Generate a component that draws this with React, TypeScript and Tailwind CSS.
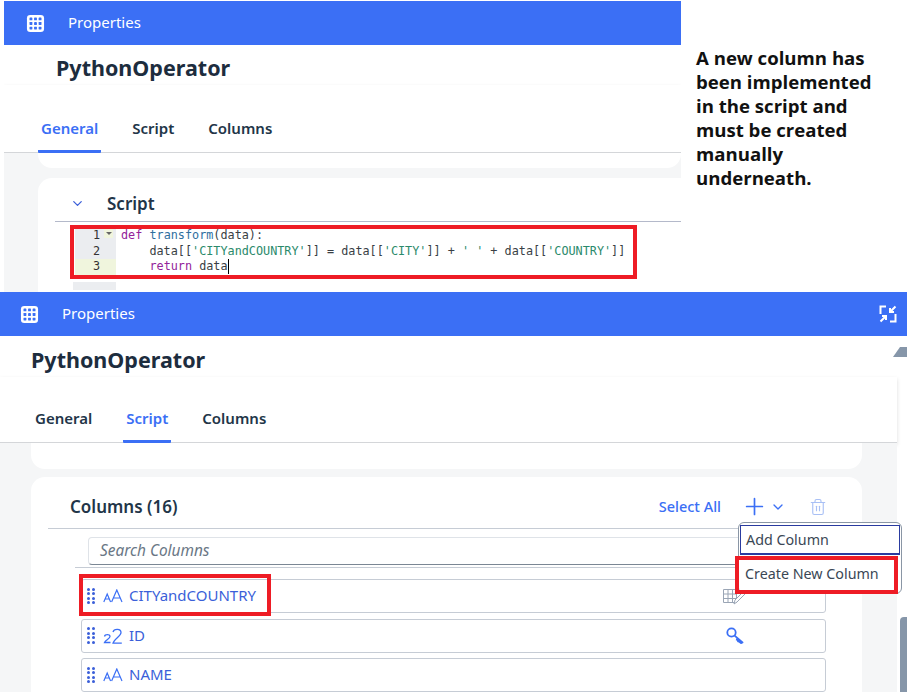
import { ChevronDown, Plus, Trash2 } from "lucide-react"

const BODY = "font-['Noto_Sans','Open_Sans',sans-serif]"

function GridIcon({ className }: { className: string }) {
    return (
        <svg viewBox="0 0 20 20" className={className} fill="none">
            <rect x="1" y="1" width="18" height="18" rx="3.5" fill="#fff" />
            {[5.2, 10, 14.8].flatMap((x) =>
                [5.2, 10, 14.8].map((y) => (
                    <rect key={`${x}-${y}`} x={x - 1.5} y={y - 1.5} width="3" height="3" rx="0.5" fill="#3b6ff5" />
                ))
            )}
        </svg>
    )
}

function Header({ pad, gap, children }: { pad: string; gap: string; children?: React.ReactNode }) {
    return (
        <div className={`flex h-[44px] items-center bg-[#3b6ff5] ${pad} ${gap}`}>
            <GridIcon className="h-[19px] w-[19px]" />
            <span className="flex-1 pb-[2px] text-[15px] text-white">Properties</span>
            {children}
        </div>
    )
}

function Tabs({ active, height, pad, gap }: { active: string; height: string; pad: string; gap: string }) {
    return (
        <div className={`flex items-end border-b border-[#d4d6d9] shadow-[0_2px_4px_rgba(0,0,0,0.14)] ${height} ${pad} ${gap}`}>
            {["General", "Script", "Columns"].map((t) => (
                <div
                    key={t}
                    className={`-mb-px border-b-[3px] px-[3px] pb-[12px] text-[15px] leading-[20px] font-semibold ${
                        t === active ? "rounded-b-[1px] border-[#3b6ff5] text-[#3b6ff5]" : "border-transparent text-[#223548]"
                    }`}
                >
                    {t}
                </div>
            ))}
        </div>
    )
}

function AaIcon() {
    return (
        <svg viewBox="0 0 20 14" className="h-[14px] w-[20px]" fill="none" stroke="#3b6ff5" strokeWidth="1.2">
            <path d="M0.8 13 4.2 5 7.6 13M2 10h4.4" />
            <path d="M8.6 13 13.8 1 19 13M10.5 9h6.6" />
        </svg>
    )
}

function NumIcon() {
    return (
        <svg viewBox="0 0 20 16" className="h-[16px] w-[20px]" fill="none" stroke="#3b6ff5" strokeWidth="1.3">
            <path d="M1.5 8.5C2 6 7 6 7 8.5 7 10.5 2.5 12 1.5 14.5H7.5" />
            <path d="M10 4C11 0.5 18 0.5 18 4.5 18 8 11 11 10 15.2H18.8" />
        </svg>
    )
}

function DragDots() {
    return (
        <div className="grid h-[17px] w-[9px] grid-cols-2 content-between justify-between">
            {Array.from({ length: 8 }).map((_, i) => (
                <span key={i} className="h-[3px] w-[3px] rounded-full bg-[#3b5fd9]" />
            ))}
        </div>
    )
}

function ColumnRow({ name, icon, trailing }: { name: string; icon: React.ReactNode; trailing?: React.ReactNode }) {
    return (
        <div className="flex h-[34px] items-center rounded-[3px] border border-[#c6ccd5] bg-white pl-[5px]">
            <DragDots />
            <span className="ml-[7px] flex w-[20px] justify-center">{icon}</span>
            <span className="ml-[6px] flex-1 pb-px text-[15px] text-[#3b5fd9]">{name}</span>
            {trailing}
        </div>
    )
}

export default function App() {
    const code = "font-['DejaVu_Sans_Mono',monospace] text-[11.8px] leading-[15.5px] whitespace-pre"
    return (
        <div className={`relative h-[692px] w-[907px] overflow-hidden bg-white ${BODY}`}>
            {/* upper capture, the script */}
            <div className="relative flex h-[292px]">
                <div className="mt-px ml-[4px] h-[291px] w-[677px] overflow-hidden">
                    <Header pad="pl-[22px]" gap="gap-[23px]" />
                    <div className="pt-[6px] pl-[52px] text-[21.5px] leading-[34px] font-bold text-[#1d2d3e]">PythonOperator</div>
                    <Tabs active="General" height="h-[68px]" pad="pl-[34px]" gap="gap-[28px]" />
                    <div className="h-[140px] bg-[#f5f6f7] pl-[34px]">
                        <div className="h-[15px] rounded-b-[14px] bg-white" />
                        <div className="mt-[10px] h-[130px] rounded-tl-[14px] bg-white pl-[17px]">
                            <div className="flex h-[44px] items-center border-b border-[#b4b9ca] pt-[8px] pl-[15px]">
                                <ChevronDown className="h-[15px] w-[15px] text-[#3b5fd9]" strokeWidth={2} />
                                <span className="ml-[22px] text-[17px] font-semibold text-[#223548]">Script</span>
                            </div>
                            <div className="ml-[20px] pt-[6px]">
                                <div className="flex">
                                    <div className={`w-[41px] text-right text-[#333] ${code}`}>
                                        <div className="bg-[#ebedf0] pr-[16px]">1</div>
                                        <div className="bg-[#ebedf0] pr-[16px]">2</div>
                                        <div className="bg-[#f0f5dd] pr-[16px]">3</div>
                                    </div>
                                    <div className={`pl-[5px] text-[#3a3f45] ${code}`}>
                                        <div>
                                            <span className="text-[#93239a]">def</span> <span className="text-[#2f6f9f]">transform</span>(data):
                                        </div>
                                        <div>
                                            {"    data[["}
                                            <span className="text-[#2b8a6b]">'CITYandCOUNTRY'</span>
                                            {"]] = data[["}
                                            <span className="text-[#2b8a6b]">'CITY'</span>
                                            {"]] + "}
                                            <span className="text-[#2b8a6b]">' '</span>
                                            {" + data[["}
                                            <span className="text-[#2b8a6b]">'COUNTRY'</span>
                                            {"]]"}
                                        </div>
                                        <div className="flex">
                                            <span>
                                                {"    "}
                                                <span className="text-[#93239a]">return</span> data
                                            </span>
                                            <span className="h-[15px] w-px bg-black" />
                                        </div>
                                    </div>
                                </div>
                                <div className="mt-[7px] ml-[-2px] h-[8px] w-[43px] bg-[#ebedf0]" />
                            </div>
                        </div>
                    </div>
                </div>
                <p className="mt-[46px] ml-[15px] w-[186px] font-['Open_Sans',sans-serif] text-[18.6px] leading-[24px] font-bold text-[#111]">
                    A new column has been implemented in the script and must be created manually underneath.
                </p>
                <div className="absolute top-[225px] left-[70px] h-[54px] w-[567px] border-[4px] border-[#ee1c25]" />
                <span className="absolute top-[229px] left-[104px] flex h-[9px] w-[9px] justify-center bg-[#f0f5dd] pt-[3px]">
                    <span className="h-0 w-0 border-x-[3px] border-t-[3px] border-x-transparent border-t-[#666]" />
                </span>
            </div>

            {/* lower capture, the columns */}
            <div className="relative h-[400px]">
                <Header pad="pl-[20px] pr-[10px]" gap="gap-[23px]">
                    <svg viewBox="0 0 18 18" className="h-[18px] w-[18px]" fill="none" stroke="#fff" strokeWidth="2">
                        <path d="M7 1.5H1.5V9M11 16.5H16.5V9" />
                        <path d="M16.5 1.5 11 7M11 3v4h4M1.5 16.5 7 11M3 11h4v4" />
                    </svg>
                </Header>
                <div className="pt-[7px] pl-[31px] text-[21.5px] leading-[34px] font-bold text-[#1d2d3e]">PythonOperator</div>
                <div className="mr-[10px]">
                    <Tabs active="Script" height="h-[66px]" pad="pl-[32px]" gap="gap-[28px]" />
                </div>
                <div className="mr-[10px] h-[249px] bg-[#f5f6f7] pr-[35px] pl-[31px]">
                    <div className="h-[26px] rounded-b-[14px] bg-white" />
                    <div className="mt-[8px] h-[215px] rounded-t-[14px] bg-white pr-[36px] pl-[17px]">
                        <div className="flex h-[52px] items-center border-b border-[#c6ccd5] pt-[8px] pl-[22px]">
                            <span className="flex-1 text-[17px] font-semibold text-[#223548]">Columns (16)</span>
                            <span className="text-[14.5px] font-medium text-[#3b6ff5]">Select All</span>
                            <Plus className="ml-[20px] h-[27px] w-[27px] text-[#3b6ff5]" strokeWidth={1.5} />
                            <ChevronDown className="ml-[2px] h-[16px] w-[16px] text-[#3b6ff5]" strokeWidth={2} />
                            <Trash2 className="mr-[-1px] ml-[23px] h-[18px] w-[18px] text-[#a9c0f5]" strokeWidth={1.5} />
                        </div>
                        <div className="ml-[27px] border-b border-[#c6ccd5] pt-[8px] pb-[2px]">
                            <div className="ml-[13px] flex h-[28px] items-center rounded-[4px] border border-[#dfe3e8] border-b-[#7b8794] pl-[11px] text-[15.4px] text-[#6a7785] italic">
                                Search Columns
                            </div>
                        </div>
                        <div className="mt-[11px] ml-[33px] flex flex-col gap-[5.5px]">
                            <ColumnRow
                                name="CITYandCOUNTRY"
                                icon={<AaIcon />}
                                trailing={
                                    <svg viewBox="0 0 23 18" className="mr-[80px] h-[18px] w-[23px]" fill="none" stroke="#9aa5b5" strokeWidth="1">
                                        <path d="M1.5 2.5h13v13h-13zM1.5 7h13M1.5 11.5h13M6 2.5v13M10.5 2.5v13" />
                                        <path d="M12 17l1-4 8-8 2 2-8 8z" fill="#fff" />
                                    </svg>
                                }
                            />
                            <ColumnRow
                                name="ID"
                                icon={<NumIcon />}
                                trailing={
                                    <svg viewBox="0 0 18 17" className="mr-[81px] h-[17px] w-[18px]" fill="none" stroke="#3b6ff5" strokeWidth="1.8">
                                        <circle cx="5.5" cy="5.5" r="4.2" />
                                        <path d="M8.6 8.6 16.5 15.5l-1.5 0.6-2-1.6-1-0.2-.5-1.5-1.5-.4" strokeLinejoin="round" />
                                    </svg>
                                }
                            />
                            <ColumnRow name="NAME" icon={<AaIcon />} />
                        </div>
                    </div>
                </div>

                {/* scrollbar on the right edge */}
                <span className="absolute top-[55px] right-0 h-0 w-0 border-r-[7px] border-b-[10px] border-r-[#8696a9] border-b-[#8696a9] border-l-[7px] border-l-transparent" />
                <div className="absolute top-[325px] right-0 h-[75px] w-[7px] rounded-tl-[4px] bg-[#8696a9]" />

                {/* overflow menu */}
                <div className="absolute top-[230px] left-[738px] h-[72px] w-[164px] rounded-[6px] border border-[#8a96a5] bg-white text-[14.3px] text-[#3a4755]">
                    <div className="mx-px mt-[2px] flex h-[30px] items-center border border-[#2a3ba0] border-b-2 pl-[5px]">Add Column</div>
                    <div className="flex h-[36px] items-center pt-[2px] pl-[6px]">Create New Column</div>
                </div>
                <div className="absolute top-[264px] left-[735px] h-[38px] w-[163px] border-[4px] border-[#ee1c25]" />
                <div className="absolute top-[282px] left-[79px] h-[42px] w-[192px] border-[4px] border-[#ee1c25]" />
            </div>
        </div>
    )
}
